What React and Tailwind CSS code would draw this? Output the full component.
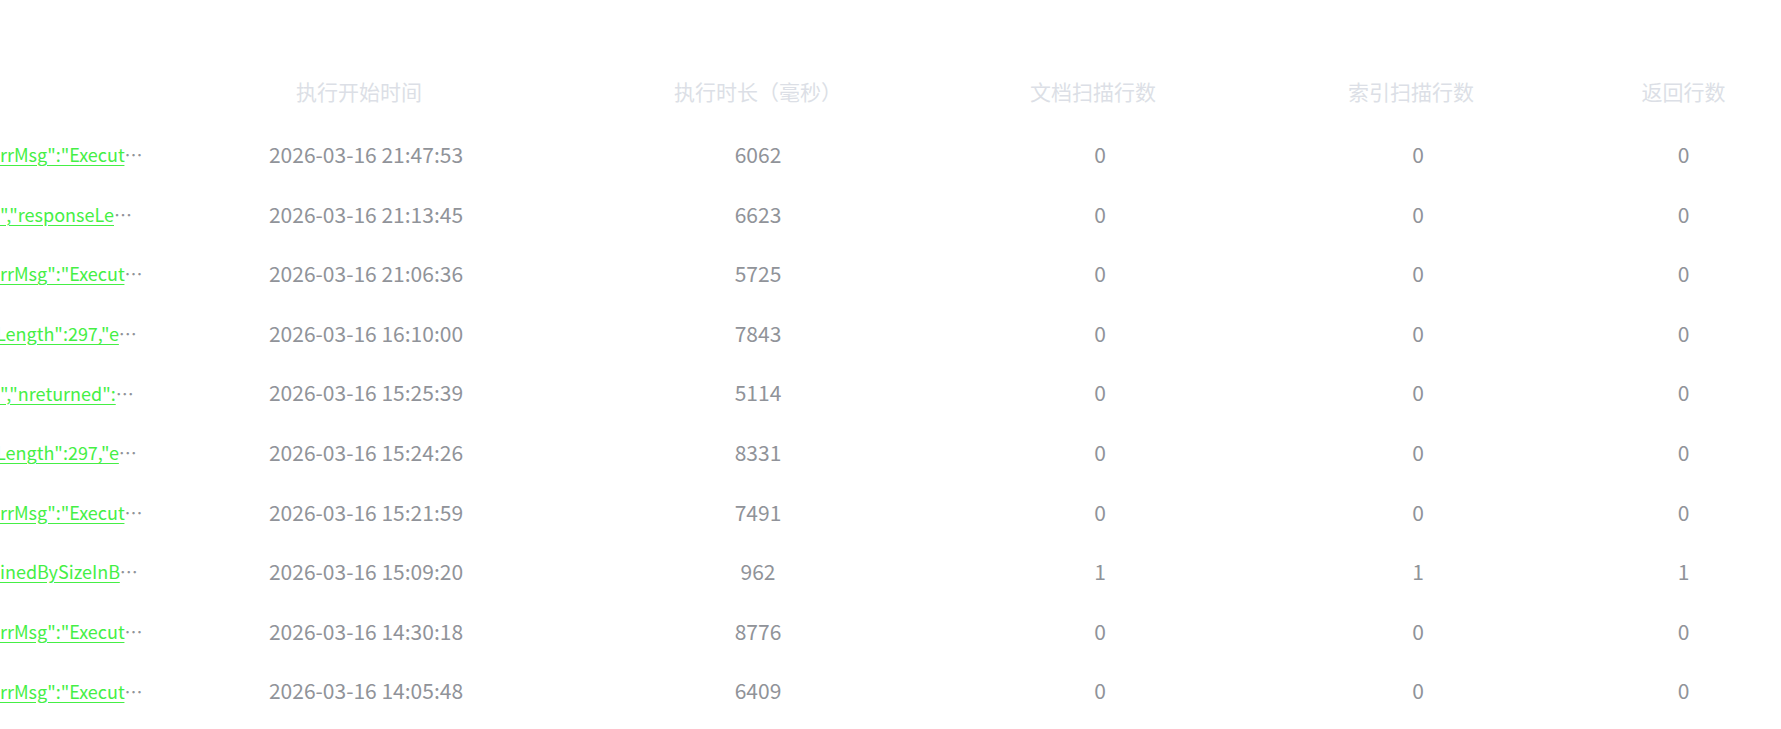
const font = { fontFamily: '"Noto Sans CJK SC", "Noto Sans", sans-serif' };

const rows = [
  { cmd: 'rrMsg":"Executor error during find command :: caused by :: operation exceeded time limit"}', shift: "", time: "2026-03-16 21:47:53", dur: 6062, doc: 0, idx: 0, ret: 0 },
  { cmd: '","responseLength":297,"protocol":"op_msg"}', shift: "", time: "2026-03-16 21:13:45", dur: 6623, doc: 0, idx: 0, ret: 0 },
  { cmd: 'rrMsg":"Executor error during find command :: caused by :: operation exceeded time limit"}', shift: "", time: "2026-03-16 21:06:36", dur: 5725, doc: 0, idx: 0, ret: 0 },
  { cmd: 'Length":297,"errMsg":"Executor error during find command"}', shift: "-ml-[4px]", time: "2026-03-16 16:10:00", dur: 7843, doc: 0, idx: 0, ret: 0 },
  { cmd: '","nreturned":0,"responseLength":297}', shift: "", time: "2026-03-16 15:25:39", dur: 5114, doc: 0, idx: 0, ret: 0 },
  { cmd: 'Length":297,"errMsg":"Executor error during find command"}', shift: "-ml-[4px]", time: "2026-03-16 15:24:26", dur: 8331, doc: 0, idx: 0, ret: 0 },
  { cmd: 'rrMsg":"Executor error during find command :: caused by :: operation exceeded time limit"}', shift: "", time: "2026-03-16 15:21:59", dur: 7491, doc: 0, idx: 0, ret: 0 },
  { cmd: 'inedBySizeInBytes":0,"nreturned":1,"responseLength":512}', shift: "", time: "2026-03-16 15:09:20", dur: 962, doc: 1, idx: 1, ret: 1 },
  { cmd: 'rrMsg":"Executor error during find command :: caused by :: operation exceeded time limit"}', shift: "", time: "2026-03-16 14:30:18", dur: 8776, doc: 0, idx: 0, ret: 0 },
  { cmd: 'rrMsg":"Executor error during find command :: caused by :: operation exceeded time limit"}', shift: "", time: "2026-03-16 14:05:48", dur: 6409, doc: 0, idx: 0, ret: 0 },
];

const cols = "grid grid-cols-[166px_400px_384px_300px_336px_195px]";

export default function App() {
  return (
    <div className="w-[1781px] h-[729px] overflow-hidden bg-white" style={font}>
      <div className="pt-[62px]">
        <div className={`${cols} h-[63px] pb-[3px] items-center text-[21px] text-[#dcdfe6]`}>
          <div />
          <div className="text-center pr-[14px]">执行开始时间</div>
          <div className="text-center">执行时长（毫秒）</div>
          <div className="text-center pr-[14px]">文档扫描行数</div>
          <div className="text-center pr-[14px]">索引扫描行数</div>
          <div className="text-center">返回行数</div>
        </div>
        {rows.map((r, i) => (
          <div key={i} className={`${cols} h-[59.6px] items-center text-[21px] text-[#909399]`}>
            <div className="overflow-hidden pr-[23.5px]">
              <div className={`truncate text-[18px] ${r.shift}`}>
                <a className="text-[#45ef45] underline underline-offset-[3px] cursor-pointer">{r.cmd}</a>
              </div>
            </div>
            <div className="text-center">{r.time}</div>
            <div className="text-center">{r.dur}</div>
            <div className="text-center">{r.doc}</div>
            <div className="text-center">{r.idx}</div>
            <div className="text-center">{r.ret}</div>
          </div>
        ))}
      </div>
    </div>
  );
}
